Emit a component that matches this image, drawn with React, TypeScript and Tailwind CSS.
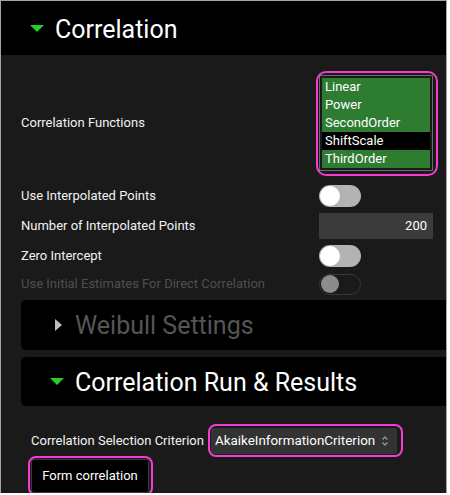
const font = { fontFamily: "Roboto, 'Noto Sans', sans-serif" };

const functions = ["Linear", "Power", "SecondOrder", "ShiftScale", "ThirdOrder"];
const selected = ["Linear", "Power", "SecondOrder", "ThirdOrder"];

// toggle switch, off state
const Toggle = ({ disabled = false }: { disabled?: boolean }) =>
  disabled ? (
    <div className="w-[42px] h-[21px] rounded-full border border-[#383838] flex items-center px-[1px]">
      <div className="w-[18px] h-[18px] rounded-full bg-[#8c8c8c]" />
    </div>
  ) : (
    <div className="w-[42px] h-[22px] rounded-full bg-[#b3b3b3] flex items-center px-[1px]">
      <div className="w-[20px] h-[20px] rounded-full bg-white" />
    </div>
  );

const Highlight = ({ className }: { className: string }) => (
  <div className={"absolute border-2 border-[#f53bd2] rounded-[8px] pointer-events-none " + className} />
);

const Row = ({ label, muted, children, className }: { label: string; muted?: boolean; children: React.ReactNode; className: string }) => (
  <div className={"flex items-center " + className}>
    <span className={"text-[13px] " + (muted ? "text-[#4f4f4f]" : "text-[#f2f2f2]")}>{label}</span>
    <div className="ml-auto w-[114px]">{children}</div>
  </div>
);

const App = () => {
  return (
    <main className="w-[450px] h-[495px] bg-white" style={font}>
      <section className="w-[447px] h-[493px] border-l border-t border-r border-[#a3a3a3] bg-[#1a1a1a] flex flex-col overflow-hidden">
        {/* header */}
        <div className="h-[54px] bg-black flex items-center pl-[29px] shrink-0">
          <svg width="14" height="8" viewBox="0 0 14 8" className="mt-[1px]">
            <polygon points="0,0 14,0 7,7" fill="#25d025" />
          </svg>
          <h2 className="ml-[11px] mt-[3px] text-white text-[25px] leading-none">Correlation</h2>
        </div>

        <div className="pl-[20px] pr-[13px] pt-[20px]">
          <Row label="Correlation Functions" className="h-[96px]">
            <div className="relative">
              <div className="border border-[#6a6a6a] p-[2px] bg-[#1a1a1a]">
                {functions.map((f) => (
                  <div
                    key={f}
                    className={
                      "h-[18px] flex items-center pl-[3px] text-[13px] text-white " +
                      (selected.includes(f) ? "bg-[#2e7b32]" : "bg-black")
                    }
                  >
                    {f}
                  </div>
                ))}
              </div>
              <Highlight className="-left-[3px] -right-[5px] -top-[4px] -bottom-[5px] rounded-[10px]" />
            </div>
          </Row>

          <Row label="Use Interpolated Points" className="h-[28px] mt-[11px]">
            <Toggle />
          </Row>
          <Row label="Number of Interpolated Points" className="h-[28px] mt-[2px]">
            <div className="h-[26px] bg-[#3b3b3b] flex items-center justify-end pr-[6px] text-[13px] text-white">200</div>
          </Row>
          <Row label="Zero Intercept" className="h-[28px] mt-[2px]">
            <Toggle />
          </Row>
          <Row label="Use Initial Estimates For Direct Correlation" muted className="h-[28px]">
            <Toggle disabled />
          </Row>
        </div>

        {/* collapsed panel */}
        <div className="ml-[20px] mt-[2px] h-[52px] bg-black rounded-l-[5px] flex items-center pl-[34px]">
          <svg width="7" height="12" viewBox="0 0 7 12">
            <polygon points="0,0 7,6 0,12" fill="#bdbdbd" />
          </svg>
          <span className="ml-[13px] mt-[2px] text-[25px] text-[#555555] leading-none">Weibull Settings</span>
        </div>

        {/* expanded panel */}
        <div className="ml-[20px] mt-[7px] h-[51px] bg-black rounded-l-[5px] flex items-center pl-[29px]">
          <svg width="14" height="8" viewBox="0 0 14 8" className="mt-[1px]">
            <polygon points="0,0 14,0 7,7" fill="#25d025" />
          </svg>
          <span className="ml-[11px] mt-[2px] text-[25px] text-white leading-none">Correlation Run &amp; Results</span>
        </div>

        <div className="pl-[30px] pt-[22px]">
          <div className="flex items-center h-[26px]">
            <span className="text-[13px] text-[#f2f2f2]">Correlation Selection Criterion</span>
            <div className="relative ml-[7px]">
              <div className="w-[186px] h-[26px] bg-[#333333] rounded-[3px] flex items-center pl-[4px] pr-[8px] text-[13.4px] text-white">
                <span>AkaikeInformationCriterion</span>
                <svg width="8" height="12" viewBox="0 0 8 12" className="ml-auto">
                  <path d="M1.5 4.5 L4 2 L6.5 4.5 M1.5 7.5 L4 10 L6.5 7.5" stroke="#a0a0a0" strokeWidth="1.2" fill="none" />
                </svg>
              </div>
              <Highlight className="-left-[3px] -right-[6px] -top-[4px] -bottom-[3px]" />
            </div>
          </div>
          <div className="relative w-[118px] mt-[5px]">
            <button className="w-[118px] h-[34px] bg-black border border-[#3a3a3a] rounded-[3px] text-[13px] text-white">
              Form correlation
            </button>
            <Highlight className="-left-[3px] -right-[4px] -top-[3px] -bottom-[3px]" />
          </div>
        </div>
      </section>
    </main>
  );
};

export default App;
